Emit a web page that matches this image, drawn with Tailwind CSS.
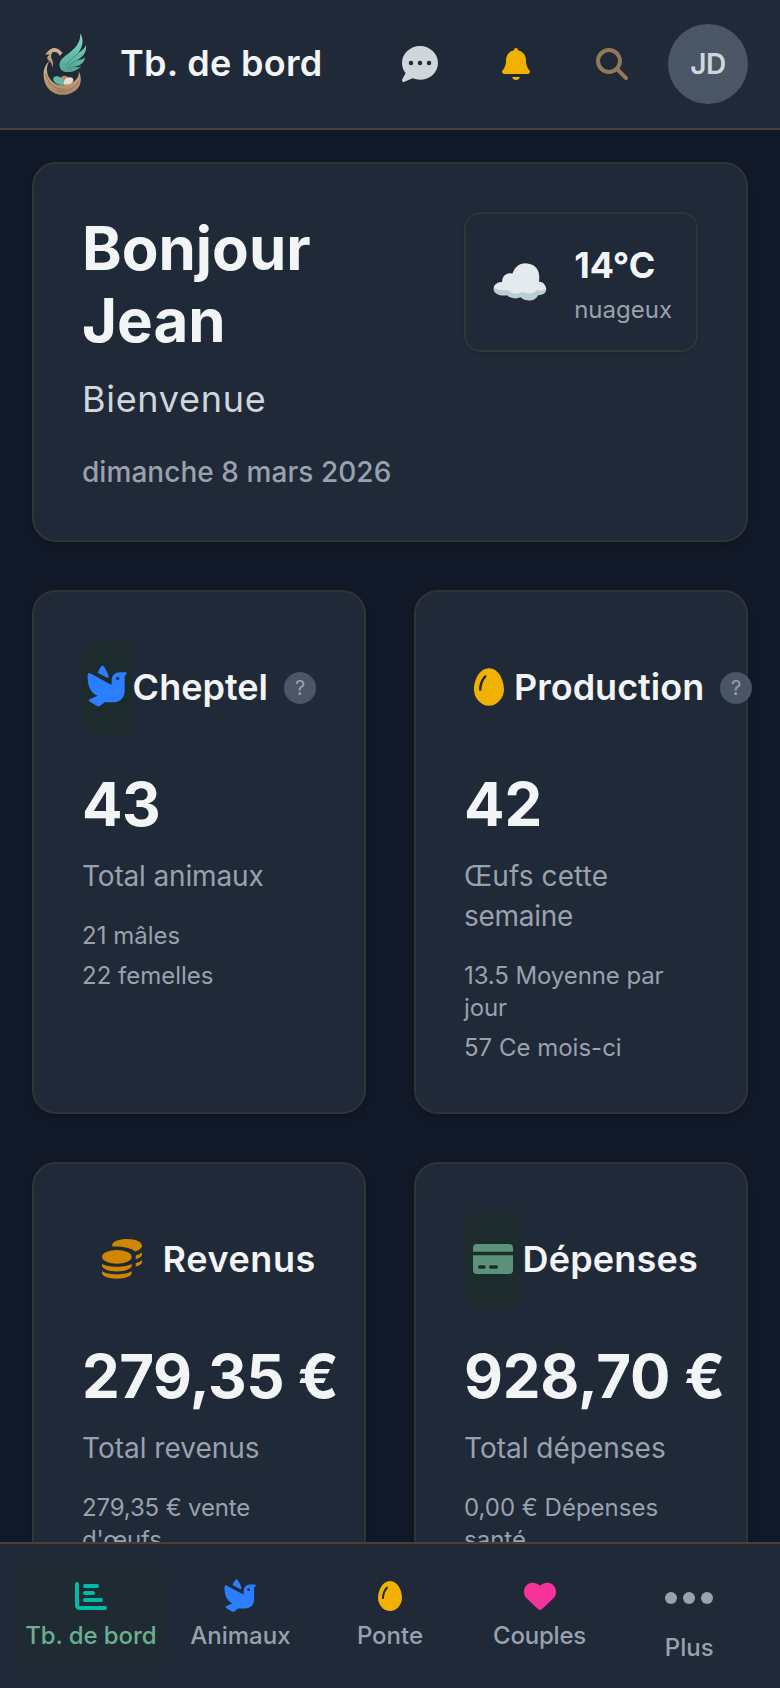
<!DOCTYPE html>
<html lang="fr">
<head>
    <meta charset="UTF-8">
    <meta name="viewport" content="width=device-width, initial-scale=1.0">
    <title>Tb. de bord</title>
    <script src="https://cdn.jsdelivr.net/npm/@tailwindcss/browser@4"></script>
</head>
<body class="bg-[#111827] text-[#f3f4f6] font-['Inter','Noto_Sans',sans-serif] h-screen overflow-hidden flex flex-col">

    <!-- Shared icons -->
    <svg class="hidden">
        <symbol id="dove" viewBox="202 255 120 124">
            <path d="M244.500 258.500Q249 253.500 253.500 259Q262 272 266.500 286V291Q266 294.500 262 292.500L234 277.500Q237 267 244.500 258.500Z"/>
            <path fill-rule="evenodd" d="M204 284Q204.500 276 211.500 279L273 312.500Q276 314 276 310V300C276 285.500 286 276 300 276H318.500Q323 276.500 320.500 280L315 288V333C315 352 301 366 282 366H255L241.500 376.500Q237 380 232 377L209.500 363.500Q205 360 209.500 357L234 346.500C214 338 202.500 318 204 284ZM294 290a5 5 0 1 0 0 10a5 5 0 1 0 0-10Z"/>
        </symbol>
        <symbol id="egg" viewBox="0 0 384 512">
            <path d="M192 496C86 496 0 394 0 288C0 176 64 16 192 16s192 160 192 272c0 106-86 208-192 208zM154.800 134c6.500-6 7-16.100 1-22.600s-16.100-7-22.600-1c-23.900 21.800-41.100 52.700-52.300 84.200C69.700 226.100 64 259.700 64 288c0 8.800 7.200 16 16 16s16-7.200 16-16c0-24.500 5-54.400 15.100-82.800c10.100-28.500 25-54.100 43.700-71.200z"/>
        </symbol>
    </svg>

    <!-- Header -->
    <header class="shrink-0 h-[130px] bg-[#1f2937] border-b-2 border-[#4a4036] px-8 flex items-center justify-between">
        <div class="flex items-center gap-6">
            <svg class="w-16 h-16" viewBox="96 97 192 192" fill="none">
                <defs>
                    <linearGradient id="wing" x1="0" y1="0" x2="0" y2="1">
                        <stop offset="0" stop-color="#86dcc4"/>
                        <stop offset="1" stop-color="#4fa592"/>
                    </linearGradient>
                    <linearGradient id="nest" x1="0" y1="0" x2="0" y2="1">
                        <stop offset="0" stop-color="#d6b593"/>
                        <stop offset="1" stop-color="#a98763"/>
                    </linearGradient>
                </defs>
                <path fill="url(#wing)" d="M241 101C252 122 249 142 234 160C247 153 255 145 258 136C261 156 250 171 231 182C243 181 250 178 255 173C253 190 240 199 224 201C232 204 239 202 244 198C234 212 215 219 197 217C184 216 176 204 179 190C185 165 243 153 241 101Z"/>
                <path stroke="#2b5a55" stroke-width="1.500" d="M236 159C222 172 207 181 199 198M234 181C221 186 209 193 204 206M226 201C217 202 211 206 207 211"/>
                <path fill="url(#nest)" d="M134 165C142 161 145 146 164 145C174 145 181 153 188 160L179 169C177 161 169 156 162 157C154 159 151 167 155 177C161 188 160 197 156 204C157 192 151 185 144 180C139 175 144 168 149 166C144 164 139 165 134 165Z"/>
                <circle cx="158" cy="158" r="1.500" fill="#3b332c"/>
                <path fill="url(#nest)" d="M149 183C138 198 138 222 150 238C163 256 183 261 203 254C226 247 239 234 236 215C247 235 245 262 220 277C190 294 153 285 138 256C125 228 130 198 149 183Z"/>
                <path stroke="#6d5844" stroke-width="1.500" d="M137 222C143 252 165 272 195 268M171 274C204 279 226 264 239 242"/>
                <circle cx="194" cy="240" r="12" fill="#b98c66"/>
                <path fill="#62b9a4" d="M160 241C157 230 173 226 184 235C191 241 193 250 190 256C176 256 164 252 160 241Z"/>
                <path fill="#efdccb" d="M191 255C189 242 199 232 211 233C222 234 223 246 213 251C207 255 200 256 191 255Z"/>
            </svg>
            <h1 class="text-[36px] leading-[54px] pb-0.5 font-semibold tracking-[0.3px]">Tb. de bord</h1>
        </div>
        <div class="flex items-center gap-4">
            <button class="size-20 flex items-center justify-center">
                <svg class="size-9 fill-[#d1d5dc]" viewBox="0 0 512 512"><path fill-rule="evenodd" d="M256 480c141.400 0 256-107.500 256-240S397.400 0 256 0S0 107.500 0 240c0 54.300 19.200 104.300 51.600 144.500L2.800 476.800c-4.800 9-3.300 20 3.600 27.500s17.800 9.800 27.100 5.800l118.400-50.700C183.700 472.600 219 480 256 480zM128 208a32 32 0 1 1 0 64a32 32 0 1 1 0-64zm128 0a32 32 0 1 1 0 64a32 32 0 1 1 0-64zm128 0a32 32 0 1 1 0 64a32 32 0 1 1 0-64z"/></svg>
            </button>
            <button class="size-20 flex items-center justify-center">
                <svg class="w-7 h-8 fill-[#f0b100]" viewBox="0 0 448 512"><path d="M224 0c-17.700 0-32 14.300-32 32v3.200C119 50 64 114.600 64 192v21.700c0 48.100-16.400 94.800-46.400 132.400L7.800 358.300C2.700 364.600 0 372.400 0 380.500C0 400.100 15.900 416 35.500 416h376.900c19.600 0 35.500-15.900 35.500-35.500c0-8.100-2.700-15.900-7.800-22.200l-9.800-12.200C400.400 308.500 384 261.800 384 213.700V192c0-77.400-55-142-128-156.800V32c0-17.700-14.300-32-32-32zM162 464c7.100 27.600 32.200 48 62 48s54.900-20.400 62-48z"/></svg>
            </button>
            <button class="size-20 flex items-center justify-center">
                <svg class="size-8 fill-[#92795a]" viewBox="0 0 512 512"><path d="M416 208c0 45.900-14.900 88.300-40 122.700L502.600 457.400c12.500 12.500 12.500 32.800 0 45.300s-32.800 12.500-45.300 0L330.700 376c-34.400 25.200-76.800 40-122.700 40C93.100 416 0 322.900 0 208S93.100 0 208 0S416 93.100 416 208zM208 352a144 144 0 1 0 0-288a144 144 0 1 0 0 288z"/></svg>
            </button>
            <div class="size-20 rounded-full bg-[#4a5565] flex items-center justify-center text-[28px] font-semibold tracking-[-0.5px] text-[#d1d5dc]">JD</div>
        </div>
    </header>

    <main class="flex-1 min-h-0 overflow-hidden px-8 pt-8 space-y-12">
        <!-- Welcome -->
        <section class="bg-[#1f2937] border-2 border-[#323335] rounded-3xl p-12 flex items-start justify-between shadow-md">
            <div class="w-[340px]">
                <h2 class="text-[60px] leading-[72px] font-bold w-[240px]">Bonjour Jean</h2>
                <p class="mt-4 text-[36px] leading-[54px] tracking-[0.7px] text-[#d1d5dc]">Bienvenue</p>
                <p class="mt-[26px] text-[28px] leading-[40px] font-medium tracking-[0.05px] text-[#99a1af] whitespace-nowrap">dimanche 8 mars 2026</p>
            </div>
            <div class="border-2 border-[#323335] rounded-2xl p-6 flex items-center gap-6 shadow-sm">
                <span class="w-[60px] text-[48px] leading-[64px]">☁️</span>
                <div>
                    <div class="text-[36px] leading-[54px] pb-0.5 font-bold">14°C</div>
                    <div class="text-[24px] leading-[32px] text-[#99a1af]">nuageux</div>
                </div>
            </div>
        </section>

        <!-- Stats -->
        <section class="grid grid-cols-2 gap-12">
            <div class="bg-[#1f2937] border-2 border-[#323335] rounded-3xl p-12 shadow-md">
                <div class="flex items-center justify-between mb-8">
                    <div class="w-24 h-24 rounded-2xl bg-[#1e2b2c] flex items-center justify-center">
                        <span class="w-[50px] shrink-0 flex justify-center"><svg class="w-10 h-[42px] fill-[#2b7fff] -mt-1"><use href="#dove"/></svg></span>
                    </div>
                    <div class="shrink-0 flex items-center gap-4">
                        <h3 class="text-[36px] leading-[54px] pb-0.5 font-semibold">Cheptel</h3>
                        <span class="size-8 rounded-full bg-[#4a5565] text-[20px] text-[#99a1af] flex items-center justify-center">?</span>
                    </div>
                </div>
                <div class="text-[60px] leading-[72px] font-bold tracking-[-0.5px]">43</div>
                <div class="mt-4 text-[28px] leading-[40px] tracking-[-0.15px] text-[#99a1af]">Total animaux</div>
                <div class="mt-6 space-y-2 text-[24px] leading-[32px] text-[#99a1af]">
                    <div>21 mâles</div>
                    <div>22 femelles</div>
                </div>
            </div>

            <div class="bg-[#1f2937] border-2 border-[#323335] rounded-3xl p-12 shadow-md">
                <div class="flex items-center justify-between mb-8">
                    <div class="w-24 h-24 flex items-center justify-center">
                        <span class="w-[50px] shrink-0 flex justify-center"><svg class="w-[30px] h-10 fill-[#f0b100] -mt-0.5"><use href="#egg"/></svg></span>
                    </div>
                    <div class="shrink-0 flex items-center gap-4">
                        <h3 class="text-[36px] leading-[54px] pb-0.5 font-semibold">Production</h3>
                        <span class="size-8 rounded-full bg-[#4a5565] text-[20px] text-[#99a1af] flex items-center justify-center">?</span>
                    </div>
                </div>
                <div class="text-[60px] leading-[72px] font-bold">42</div>
                <div class="mt-4 text-[28px] leading-[40px] text-[#99a1af]">
                    <div class="tracking-[0.1px]">Œufs cette</div>
                    <div class="tracking-[-0.3px]">semaine</div>
                </div>
                <div class="mt-6 space-y-2 text-[24px] leading-[32px] text-[#99a1af]">
                    <div class="tracking-[-0.1px]">13.5 Moyenne par jour</div>
                    <div>57 Ce mois-ci</div>
                </div>
            </div>

            <div class="bg-[#1f2937] border-2 border-[#323335] rounded-3xl p-12 shadow-md">
                <div class="flex items-center justify-between mb-8">
                    <div class="w-24 h-24 flex items-center justify-center">
                        <span class="w-[50px] shrink-0 flex justify-center">
                            <svg class="size-10 fill-[#d08700] -mt-0.5" viewBox="246 267 121 121">
                                <path d="M277 289V285C277 275 297 267 322 267S367 275.500 367 287C367 295 359 301 346 305C334 294 308 289 277 290Z"/>
                                <path d="M348 317Q360 314 367 308V314Q366 323 348 328ZM348 340Q360 337 367 331V337Q366 346 348 350Z"/>
                                <ellipse cx="291" cy="321" rx="45" ry="21"/>
                                <path d="M246 342C260 354 322 354 336 342V347C336 357 316 365 291 365S246 357 246 347ZM246 364C260 377 322 377 336 364V369C336 380 316 387 291 387S246 380 246 369Z"/>
                            </svg>
                        </span>
                    </div>
                    <h3 class="shrink-0 text-[36px] leading-[54px] pb-0.5 font-semibold tracking-[0.6px]">Revenus</h3>
                </div>
                <div class="text-[60px] leading-[72px] font-bold tracking-[-0.5px] whitespace-nowrap">279,35 €</div>
                <div class="mt-4 text-[28px] leading-[40px] text-[#99a1af]">Total revenus</div>
                <div class="mt-6 text-[24px] leading-[32px] tracking-[-0.15px] text-[#99a1af]">279,35 € vente d'œufs</div>
            </div>

            <div class="bg-[#1f2937] border-2 border-[#323335] rounded-3xl p-12 shadow-md">
                <div class="flex items-center justify-between mb-8">
                    <div class="w-24 h-24 rounded-2xl bg-[#1e2b2c] flex items-center justify-center">
                        <span class="w-[50px] shrink-0 flex justify-center">
                            <svg class="w-10 h-[30px] fill-[#5b9279] -mt-0.5" viewBox="219 282 120 90">
                                <path d="M219 305V294Q219 282 231 282H327Q339 282 339 294V305Z"/>
                                <path fill-rule="evenodd" d="M219 316H339V360Q339 372 327 372H231Q219 372 219 360ZM239 346a5 5 0 0 0 0 10h13a5 5 0 0 0 0-10ZM272 346a5 5 0 0 0 0 10h17a5 5 0 0 0 0-10Z"/>
                            </svg>
                        </span>
                    </div>
                    <h3 class="shrink-0 text-[36px] leading-[54px] pb-0.5 font-semibold tracking-[0.2px]">Dépenses</h3>
                </div>
                <div class="text-[60px] leading-[72px] font-bold tracking-[-0.2px] whitespace-nowrap">928,70 €</div>
                <div class="mt-4 text-[28px] leading-[40px] text-[#99a1af]">Total dépenses</div>
                <div class="mt-6 text-[24px] leading-[32px] text-[#99a1af]">0,00 € Dépenses santé</div>
            </div>
        </section>
    </main>

    <!-- Bottom nav -->
    <nav class="shrink-0 h-[146px] bg-[#1f2937] border-t-2 border-[#4a4036] px-4 pt-5 flex items-start text-[24px] leading-[32px] font-medium text-[#99a1af]">
        <a class="flex-1 basis-0 h-[104px] py-4 rounded-2xl bg-[#1f2a33] text-[#6aaf8e] flex flex-col items-center gap-2 whitespace-nowrap">
            <svg class="size-8" viewBox="0 0 32 32" fill="none" stroke="#00bba7" stroke-width="4" stroke-linecap="round" stroke-linejoin="round"><path d="M2 4V25Q2 28 5 28H30M10 6H22M10 13H18M10 20H26"/></svg>
            <span class="tracking-[-0.1px]">Tb. de bord</span>
        </a>
        <a class="flex-1 basis-0 h-[104px] py-4 flex flex-col items-center gap-2">
            <svg class="w-8 h-[33px] fill-[#2b7fff] -mt-px"><use href="#dove"/></svg>
            <span>Animaux</span>
        </a>
        <a class="flex-1 basis-0 h-[104px] py-4 flex flex-col items-center gap-2">
            <svg class="w-6 h-8 fill-[#f0b100]"><use href="#egg"/></svg>
            <span>Ponte</span>
        </a>
        <a class="flex-1 basis-0 h-[104px] py-4 flex flex-col items-center gap-2">
            <svg class="size-8 fill-[#f6339a]" viewBox="0 0 512 512"><path d="M47.600 300.400L228.300 469.100c7.500 7 17.400 10.900 27.700 10.900s20.200-3.900 27.700-10.900L464.400 300.400c30.400-28.300 47.600-68 47.600-109.500v-5.800c0-69.900-50.500-129.500-119.400-141C347 36.500 300.600 51.400 268 84L256 96L244 84c-32.600-32.600-79-47.500-124.600-39.900C50.500 55.600 0 115.200 0 185.100v5.800c0 41.500 17.200 81.200 47.600 109.500z"/></svg>
            <span class="tracking-[-0.2px]">Couples</span>
        </a>
        <a class="flex-1 basis-0 pt-4 flex flex-col items-center gap-4">
            <span class="h-9 flex items-center gap-1.5">
                <i class="size-3 rounded-full bg-[#99a1af]"></i>
                <i class="size-3 rounded-full bg-[#99a1af]"></i>
                <i class="size-3 rounded-full bg-[#99a1af]"></i>
            </span>
            <span>Plus</span>
        </a>
    </nav>
</body>
</html>
